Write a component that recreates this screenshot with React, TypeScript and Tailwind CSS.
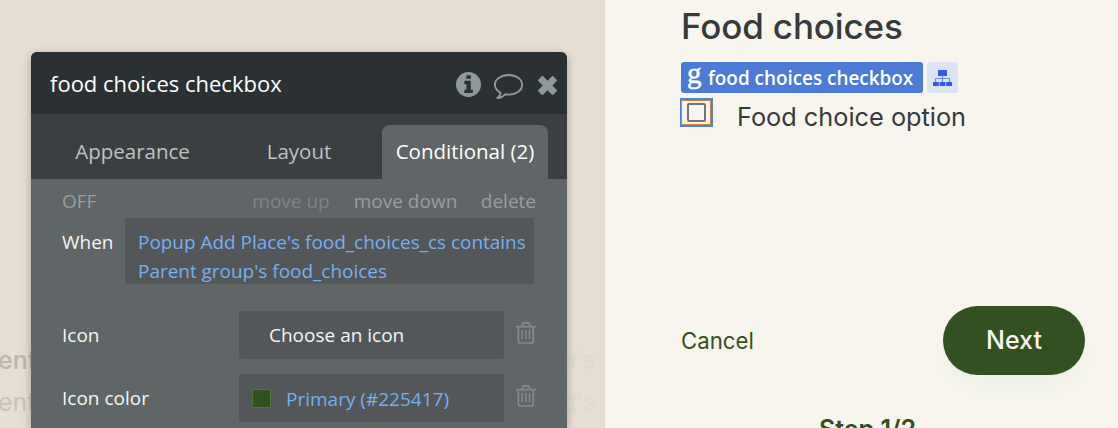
import type { ReactNode } from 'react'

function TrashIcon() {
  return (
    <svg className="w-5 h-[22px] shrink-0 text-[#85898b]" viewBox="0 0 20 22" fill="none" stroke="currentColor">
      <path strokeWidth={1.7} d="M0 4.7H20" />
      <path strokeWidth={1.6} d="M5.7 4.5L6.8 1.6Q7.1.9 8 .9H12Q12.9.9 13.2 1.6L14.3 4.5" />
      <path strokeWidth={1.7} d="M2.4 4.7V19Q2.4 21 4.4 21H15.2Q17.2 21 17.2 19V4.7" />
      <path strokeWidth={1.5} d="M6.1 8V17M9.8 8V17M13.5 8V17" />
    </svg>
  )
}

function InfoIcon() {
  return (
    <svg className="w-[25px] h-[25px]" viewBox="0 0 24 24">
      <circle cx="12" cy="12" r="12" fill="#8f999b" />
      <path fill="#2b3033" d="M10 3h4.200v3.500H10zM8 8.500h6.200v8.500h2v3.200H8v-3.200h2v-5.200H8z" />
    </svg>
  )
}

function CommentIcon() {
  return (
    <svg className="w-[29px] h-[25px]" viewBox="0 0 28 24" fill="none" stroke="#8f999b" strokeWidth={1.8} strokeLinejoin="round">
      <path d="M14.2.9C6.900.9.9 5.100.9 10.400C.9 13.600 3.100 16.400 6.500 18.100C6 20.400 4.800 21.900 3.200 23.300C6.200 23 8.800 21.700 10.700 19.500C11.800 19.700 13 19.800 14.200 19.800C21.500 19.800 27.200 15.700 27.200 10.400C27.200 5.100 21.500.9 14.200.9Z" />
    </svg>
  )
}

function CloseIcon() {
  return (
    <svg className="w-[19px] h-[19px]" viewBox="0 0 19 19" fill="#8f999b" stroke="#8f999b" strokeWidth={2} strokeLinejoin="round">
      <path d="M4.400 1L9.500 6.100L14.600 1L18 4.400L12.900 9.500L18 14.600L14.600 18L9.500 12.900L4.400 18L1 14.600L6.100 9.500L1 4.400Z" />
    </svg>
  )
}

function SitemapIcon() {
  return (
    <svg className="w-[19px] h-4" viewBox="0 0 19 16" fill="#3459e6">
      <path d="M5 0h9v6H5zM0 12h5.800v4H0zM6.600 12h5.800v4H6.600zM13.200 12H19v4h-5.800z" />
      <path d="M2.500 12V8.500H16.500V12M9.500 5V12" fill="none" stroke="#6f8bec" strokeWidth={1.2} />
    </svg>
  )
}

function PropertyRow({ label, children }: { label: string; children: ReactNode }) {
  return (
    <div className="flex h-12">
      <div className="w-[177px] leading-[49px]">{label}</div>
      <div className="flex w-[265px] items-center rounded-[2px] bg-[#535759]">{children}</div>
      <div className="ml-3 pt-[11px]">
        <TrashIcon />
      </div>
    </div>
  )
}

function PropertyEditor() {
  return (
    <section className="relative h-[376px] w-[536px] overflow-hidden rounded-t-[6px] bg-[#606567] font-['Open_Sans',sans-serif] text-[19px] text-[#f4f5f5]">
      <header className="flex h-[62px] items-center bg-[#2b3033] pr-[10px] pl-[19px]">
        <h2 className="flex-1 pt-px text-[22px] whitespace-nowrap text-white">food choices checkbox</h2>
        <button className="mt-[3px]"><InfoIcon /></button>
        <button className="mt-[7px] ml-[13px]"><CommentIcon /></button>
        <button className="mt-[5px] ml-[15px]"><CloseIcon /></button>
      </header>

      <nav className="flex h-[65px] items-end bg-[#3c3f42] text-[20.5px] leading-[52px] text-[#bfc1c2]">
        <div className="h-[54px] w-[203px] text-center">Appearance</div>
        <div className="h-[54px] w-[130px] text-center">Layout</div>
        <div className="ml-[18px] h-[54px] w-[166px] rounded-t-[8px] bg-[#606567] text-center text-white">Conditional (2)</div>
      </nav>

      <div className="pl-[31px]">
        <div className="flex h-[39px] pr-[31px] leading-[45px] text-[#9a9da0]">
          <span className="flex-1">OFF</span>
          <span className="text-[#808487]">move up</span>
          <span className="ml-6">move down</span>
          <span className="ml-[23.5px]">delete</span>
        </div>
        <div className="flex">
          <div className="w-[63px] leading-[49px]">When</div>
          <div className="h-[66px] w-[409px] rounded-[2px] bg-[#535759] pt-[10px] pl-[13px] text-[18.95px] leading-[29px] whitespace-nowrap text-[#78aff2]">
            <p>Popup Add Place&apos;s food_choices_cs contains</p>
            <p>Parent group&apos;s food_choices</p>
          </div>
        </div>
        <div className="mt-[27px] flex flex-col gap-[15px]">
          <PropertyRow label="Icon">
            <span className="pl-[30px]">Choose an icon</span>
          </PropertyRow>
          <PropertyRow label="Icon color">
            <span className="ml-[13px] h-[19px] w-[19px] border border-[#4f7538] bg-[#325020]" />
            <span className="pt-[2px] pl-[15px] text-[#78aff2]">Primary (#225417)</span>
          </PropertyRow>
        </div>
      </div>
    </section>
  )
}

function FoodForm() {
  return (
    <main className="h-[428px] w-[514px] overflow-hidden border-l border-[#e2dbcc] bg-[#f8f5ee] pr-[33px] pl-[76px] font-[Inter,sans-serif] text-[#353a3b]">
      <h1 className="h-[61px] pt-[4px] text-[35px] leading-[44px] font-medium tracking-[-0.15px] whitespace-nowrap">Food choices</h1>

      <div className="flex gap-1">
        <div className="mt-[1px] flex h-[31px] w-[242px] items-center rounded-[3px] bg-[#4b7bd6] pl-[6px] font-['Open_Sans',sans-serif] text-[18.9px] font-semibold whitespace-nowrap text-white">
          <span className="h-[31px] w-[21px] font-['Liberation_Serif',serif] text-[29px] leading-[22px] font-normal [-webkit-text-stroke:0.5px_white]">g</span>
          <span className="pt-[2px]">food choices checkbox</span>
        </div>
        <div className="mt-[1px] flex h-[31px] w-[31px] items-center justify-center rounded-[3px] bg-[#dbe3f5]">
          <SitemapIcon />
        </div>
      </div>

      <label className="mt-[5px] flex h-[40px]">
        <span className="-ml-px flex h-[29px] w-[33px] border-2 border-l border-[#3f87df]">
          <span className="flex flex-1 items-center justify-center border border-[#df7b2a]">
            <span className="h-[19px] w-[19px] rounded-[2px] border-2 border-[#747474]" />
          </span>
        </span>
        <span className="ml-6 text-[25.3px] leading-[37px] whitespace-nowrap">Food choice option</span>
      </label>

      <div className="mt-[168px] flex h-[69px] items-center justify-between text-[#325020]">
        <button className="text-[22.2px]">Cancel</button>
        <button className="h-[69px] w-[142px] rounded-full bg-[#325020] text-[25px] font-medium text-[#f8f5ee] shadow-[0_14px_24px_rgba(100,190,170,0.08)]">Next</button>
      </div>

      <p className="mt-[38px] ml-[138px] text-[25px] leading-[32px] font-semibold text-[#325020]">Step 1/2</p>
    </main>
  )
}

export default function App() {
  return (
    <div className="flex h-[428px] w-[1118px] overflow-hidden bg-[#e6ddd3]">
      <div className="relative h-[428px] w-[604px] overflow-hidden pt-[52px] pl-[31px]">
        {/* page text that runs behind the editor */}
        <div className="absolute top-[339px] left-[-2px] font-[Inter,sans-serif] text-[25px] leading-[42px]">
          <p className="font-medium text-[#bdb7ad]">ent</p>
          <p className="text-[#cbc4ba]">ent</p>
        </div>
        <div className="absolute top-[339px] left-[560px] font-[Inter,sans-serif] text-[25px] leading-[42px] text-[#dfd9ce]">
          <p>p&apos;s</p>
          <p>p&apos;s</p>
        </div>
        <div className="relative w-[536px] rounded-t-[6px] shadow-[0_3px_10px_rgba(0,0,0,0.28)]">
          <PropertyEditor />
        </div>
      </div>
      <FoodForm />
    </div>
  )
}
